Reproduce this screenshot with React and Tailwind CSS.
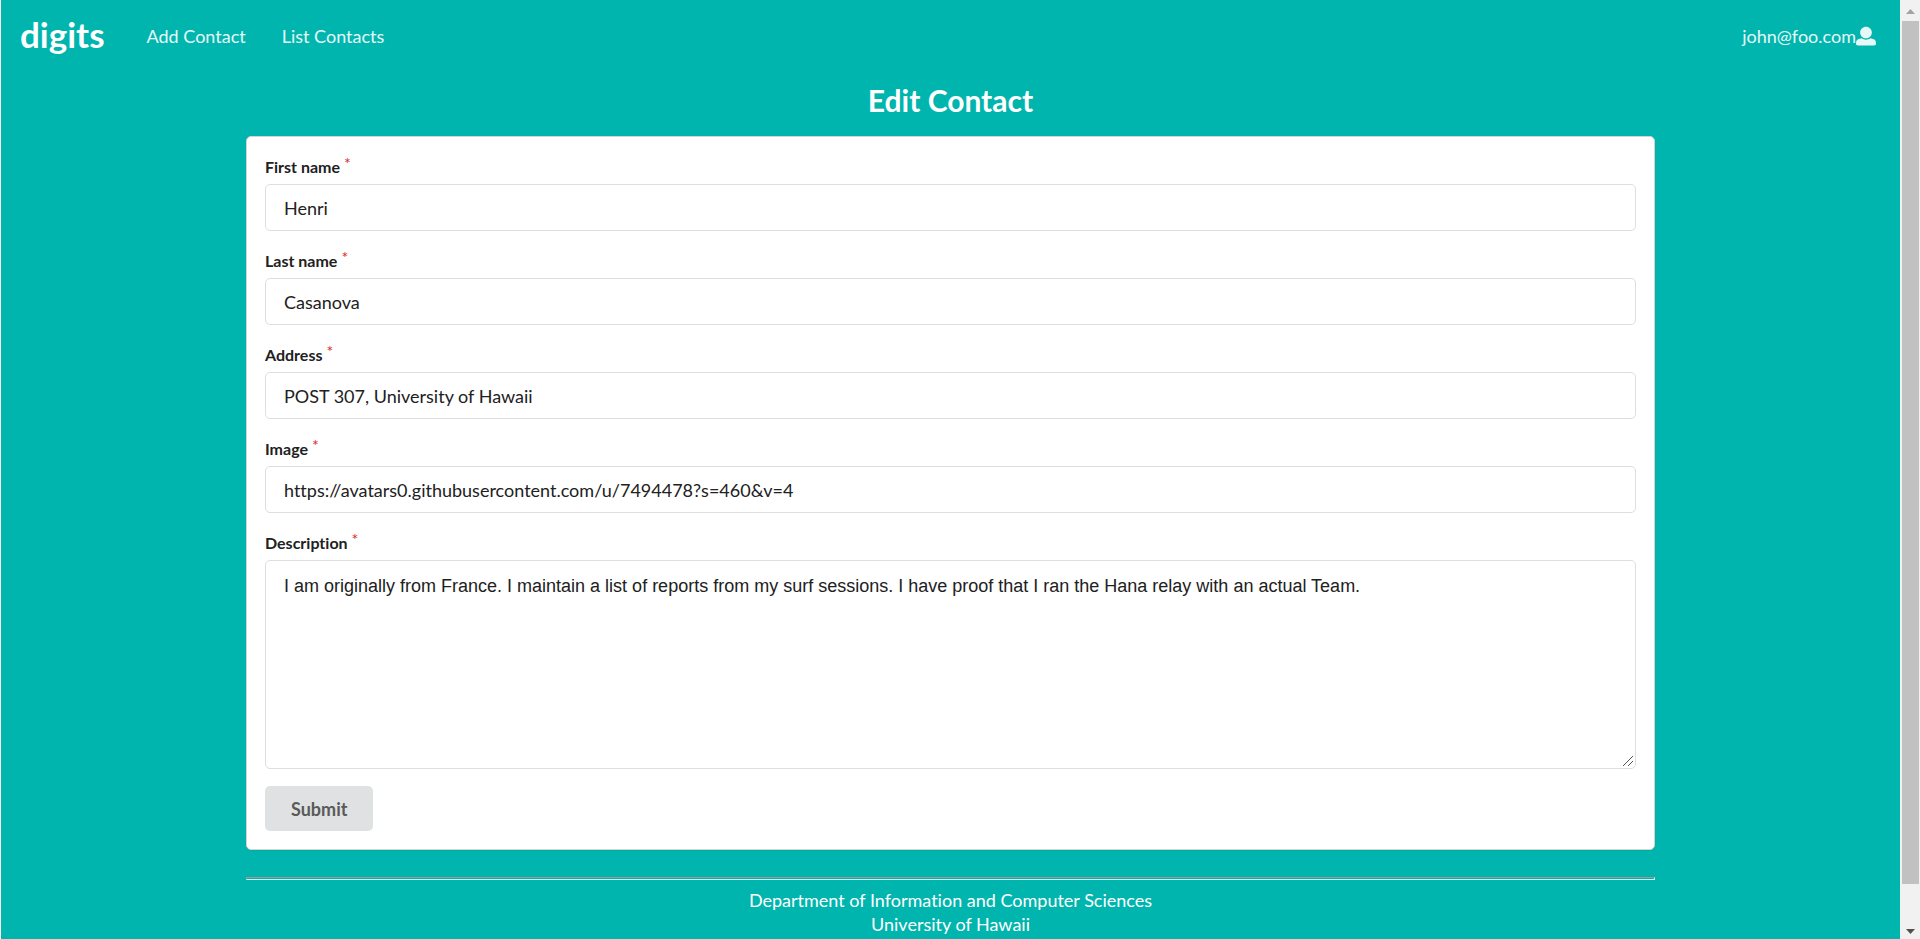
const fields = [
  { id: 'firstName', label: 'First name', value: 'Henri' },
  { id: 'lastName', label: 'Last name', value: 'Casanova' },
  { id: 'address', label: 'Address', value: 'POST 307, University of Hawaii' },
  {
    id: 'image',
    label: 'Image',
    value: 'https://avatars0.githubusercontent.com/u/7494478?s=460&v=4',
  },
];

const description =
  'I am originally from France. I maintain a list of reports from my surf sessions. I have proof that I ran the Hana relay with an actual Team.';

function UserIcon() {
  return (
    <svg viewBox="0 0 512 512" className="h-5 w-5 fill-current" aria-hidden="true">
      <path d="M256 20c84 0 150 64 150 146s-66 150-150 150-150-68-150-150S172 20 256 20zm183 314-71-18c-75 54-166 42-224 0l-71 18C30 345 0 383 0 427v27c0 26 21 42 48 42h416c27 0 48-16 48-42v-27c0-44-30-82-73-93z" />
    </svg>
  );
}

function FieldLabel({ htmlFor, children }) {
  return (
    <label htmlFor={htmlFor} className="mb-[5px] flex h-6 items-center gap-1 text-base font-bold">
      <span>{children}</span>
      <span className="-mt-2 font-normal text-[#db2828]">*</span>
    </label>
  );
}

function NavBar() {
  return (
    <nav className="flex h-[72px] items-center pl-[19px] pr-6 text-white/90">
      <a href="#home" className="mr-[42px] pb-1 text-[35px] leading-10 font-bold text-white">
        digits
      </a>
      <a href="#add" className="mr-9">Add Contact</a>
      <a href="#list">List Contacts</a>
      <button type="button" className="ml-auto flex items-center">
        <span>john@foo.com</span>
        <UserIcon />
      </button>
    </nav>
  );
}

function ContactForm() {
  return (
    <form
      className="flex flex-col rounded-[5px] border border-[#d4d4d5] bg-white p-[18px] text-[#212121] shadow-xs"
      onSubmit={(event) => event.preventDefault()}
    >
      {fields.map((field) => (
        <div key={field.id} className="mb-[18px]">
          <FieldLabel htmlFor={field.id}>{field.label}</FieldLabel>
          <input
            id={field.id}
            type="text"
            defaultValue={field.value}
            className="block h-[47px] w-full rounded-[5px] border border-[#dededf] px-[18px] outline-none"
          />
        </div>
      ))}
      <FieldLabel htmlFor="description">Description</FieldLabel>
      <div className="relative mb-[17px]">
        <textarea
          id="description"
          defaultValue={description}
          className="block h-[209px] w-full resize-none rounded-[5px] border border-[#dededf] px-[18px] py-[13px] font-['Liberation_Sans',Arial,sans-serif] leading-6 outline-none"
        />
        <svg
          viewBox="0 0 10 10"
          className="pointer-events-none absolute right-[3px] bottom-[3px] h-[10px] w-[10px] fill-none stroke-[#555555]"
          aria-hidden="true"
        >
          <path d="M0 10 10 0M5 10l5-5" />
        </svg>
      </div>
      <button
        type="submit"
        className="h-[45px] self-start rounded-[5px] bg-[#e0e1e2] px-[26px] font-bold text-[#5a5a5a]"
      >
        Submit
      </button>
    </form>
  );
}

function ScrollTrack() {
  return (
    <div className="flex w-5 shrink-0 flex-col items-center bg-[#f1f1f1]" aria-hidden="true">
      <svg viewBox="0 0 20 21" className="h-[21px] w-5 fill-[#a3a3a3]">
        <path d="M6 14h9l-4.500-5z" />
      </svg>
      <div className="ml-[1px] w-[17px] grow bg-[#c1c1c1]" />
      <svg viewBox="0 0 20 55" className="h-[55px] w-5 fill-[#505050]">
        <path d="M6 45h9l-4.500 5z" />
      </svg>
    </div>
  );
}

export default function App() {
  return (
    <div className="flex min-h-screen bg-[#00b5ad] font-[Lato,sans-serif] text-[18px] leading-6 [font-variant-ligatures:none]">
      <div className="min-w-0 grow border-l border-white">
        <NavBar />
        <main className="mx-auto max-w-[1409px]">
          <h1 className="pt-2 pb-4 text-center text-[30px] leading-10 font-bold text-white">
            Edit Contact
          </h1>
          <ContactForm />
        </main>
        <footer className="mx-auto mt-[27px] max-w-[1409px] text-center text-white">
          <hr className="mb-2 h-[3px] border border-t-[#9a9a9a] border-r-[#eeeeee] border-b-[#eeeeee] border-l-[#9a9a9a]" />
          Department of Information and Computer Sciences
          <br />
          University of Hawaii
        </footer>
      </div>
      <ScrollTrack />
    </div>
  );
}
